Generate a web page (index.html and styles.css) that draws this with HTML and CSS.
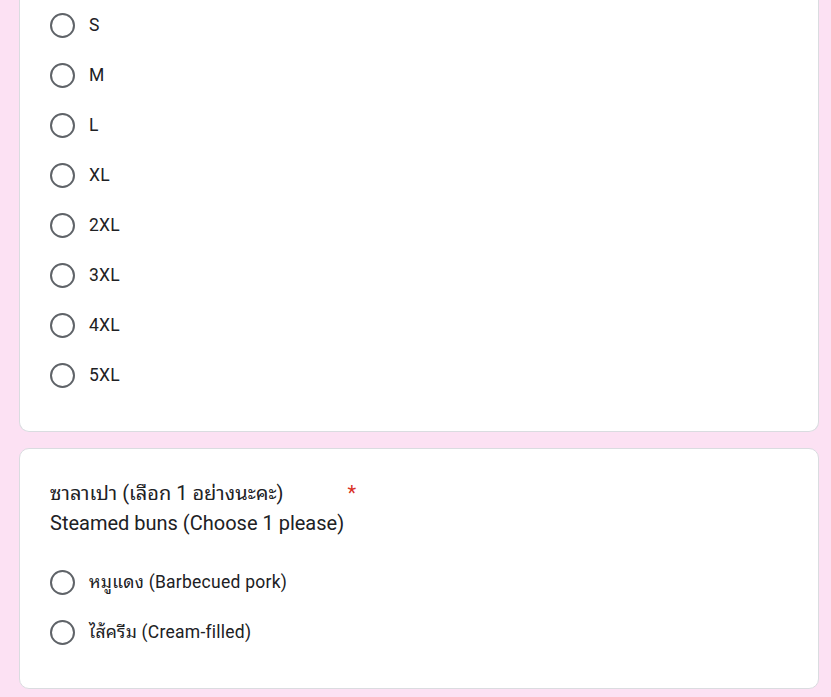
FILE: index.html
```html
<!DOCTYPE html>
<html lang="th">
<head>
<meta charset="utf-8">
<title>Form</title>
<link rel="stylesheet" href="styles.css">
</head>
<body>
<div class="page">
  <div class="card card-cut">
    <div class="options">
      <div class="option"><span class="radio"></span><span class="label">S</span></div>
      <div class="option"><span class="radio"></span><span class="label">M</span></div>
      <div class="option"><span class="radio"></span><span class="label">L</span></div>
      <div class="option"><span class="radio"></span><span class="label">XL</span></div>
      <div class="option"><span class="radio"></span><span class="label">2XL</span></div>
      <div class="option"><span class="radio"></span><span class="label">3XL</span></div>
      <div class="option"><span class="radio"></span><span class="label">4XL</span></div>
      <div class="option"><span class="radio"></span><span class="label">5XL</span></div>
    </div>
  </div>
  <div class="card">
    <div class="title">
      <div class="title-line"><span class="thai-title">ซาลาเปา (เลือก 1 อย่างนะคะ)</span><span class="req">*</span></div>
      <div class="title-line">Steamed buns (Choose 1 please)</div>
    </div>
    <div class="options">
      <div class="option"><span class="radio"></span><span class="label">หมูแดง (Barbecued pork)</span></div>
      <div class="option"><span class="radio"></span><span class="label">ไส้ครีม (Cream-filled)</span></div>
    </div>
  </div>
</div>
</body>
</html>
```

FILE: styles.css
```css
html, body {
  margin: 0;
  padding: 0;
}
body {
  background: #fce1f3;
  font-family: Roboto, "Noto Sans Thai Looped", "Noto Sans Thai UI", "Noto Sans Thai", Loma, Garuda, Tahoma, "Noto Sans", "DejaVu Sans", sans-serif;
  color: #202124;
}
.page {
  display: flex;
  flex-direction: column;
  gap: 16px;
  width: 800px;
  margin-left: 19px;
}
.card {
  background: #fff;
  border: 1px solid #dadce0;
  border-radius: 10px;
  padding: 29px 24px 31px 30px;
  box-sizing: border-box;
}
.card-cut {
  border-top: none;
  border-top-left-radius: 0;
  border-top-right-radius: 0;
  padding-top: 0;
  padding-bottom: 31px;
}
.title {
  margin-bottom: 19px;
}
.title-line {
  font-size: 20px;
  line-height: 30px;
}
.req {
  color: #d93025;
  margin-left: 64px;
}
.options {
  display: flex;
  flex-direction: column;
}
.option {
  display: flex;
  align-items: center;
  height: 50px;
}
.radio {
  width: 25px;
  height: 25px;
  border: 2.5px solid #5f6368;
  border-radius: 50%;
  box-sizing: border-box;
  margin-right: 14px;
  flex: none;
}
.label {
  font-size: 17.5px;
  line-height: 25px;
  letter-spacing: 0.25px;
}
```
